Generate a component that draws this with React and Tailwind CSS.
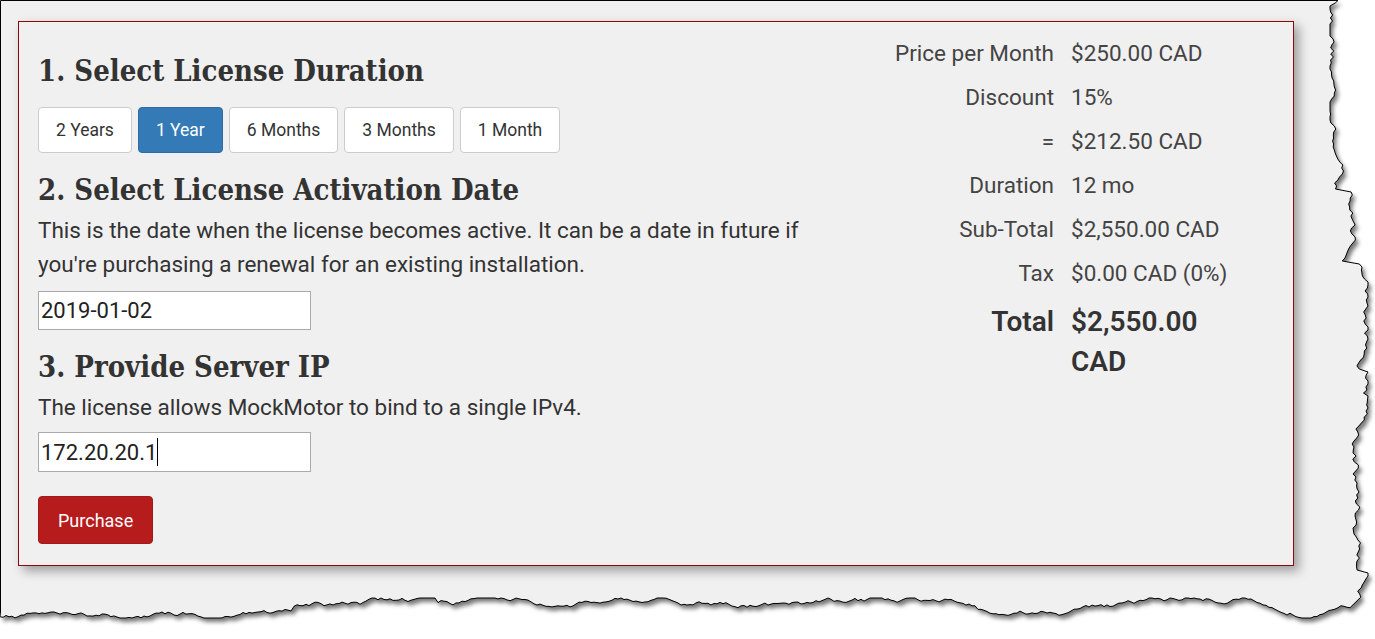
import React from 'react';

const durations = ['2 Years', '1 Year', '6 Months', '3 Months', '1 Month'];

const summary = [
  ['Price per Month', '$250.00 CAD'],
  ['Discount', '15%'],
  ['=', '$212.50 CAD'],
  ['Duration', '12 mo'],
  ['Sub-Total', '$2,550.00 CAD'],
  ['Tax', '$0.00 CAD (0%)'],
];

// jagged outline for the torn screenshot edge
function tornPath() {
  let s = 12345;
  const rnd = () => {
    s = (s * 16807) % 2147483647;
    return s / 2147483647;
  };
  const pts = [[0.5, 0.5], [1338, 0.5]];
  let x = 1338;
  for (let y = 3; y <= 598; y += 3) {
    x += (rnd() - 0.5) * 7;
    if (rnd() < 0.04) x += (rnd() - 0.3) * 30;
    x = Math.max(1330, Math.min(1368, x));
    pts.push([x, y]);
  }
  let y = 606;
  for (let xx = 1350; xx >= 0; xx -= 3) {
    y += (rnd() - 0.5) * 4;
    if (rnd() < 0.03) y += (rnd() - 0.6) * 14;
    y = Math.max(598, Math.min(618, y));
    pts.push([xx, y]);
  }
  pts.push([0.5, 612]);
  return 'M' + pts.map((p) => p[0].toFixed(1) + ' ' + p[1].toFixed(1)).join(' L') + ' Z';
}

const TORN = tornPath();

function Heading({ children, className = '' }) {
  return (
    <h2 className={`font-['DejaVu_Serif_Condensed','DejaVu_Serif',serif] font-bold text-[29px] leading-[40px] text-[#333] ${className}`}>
      {children}
    </h2>
  );
}

export default function App() {
  return (
    <div className="relative w-[1375px] h-[639px] bg-white overflow-hidden font-['Roboto',sans-serif] text-[#333]">
      <svg className="absolute inset-0" width="1375" height="639">
        <defs>
          <filter id="blur" x="-5%" y="-5%" width="110%" height="110%">
            <feGaussianBlur stdDeviation="2" />
          </filter>
        </defs>
        <path d={TORN} transform="translate(3 4)" fill="#777" filter="url(#blur)" />
        <path d={TORN} fill="#f0f0f0" stroke="#000" strokeWidth="1" />
      </svg>

      <div className="relative pt-[21px] pl-[18px]">
        <div className="w-[1276px] h-[545px] border border-[#8e0a0a] bg-[#f0f0f0] shadow-[5px_5px_10px_rgba(0,0,0,0.35)] flex">
          <div className="flex-1 pl-[19px] pt-[29px]">
            <Heading>1. Select License Duration</Heading>
            <div className="flex gap-[6px] mt-[16px]">
              {durations.map((d) => (
                <button
                  key={d}
                  className={
                    d === '1 Year'
                      ? 'h-[46px] px-[17px] rounded-[4px] border border-[#2e6da4] bg-[#337ab7] text-white text-[17.5px]'
                      : 'h-[46px] px-[17px] rounded-[4px] border border-[#ccc] bg-white text-[#333] text-[17.5px]'
                  }
                >
                  {d}
                </button>
              ))}
            </div>

            <Heading className="mt-[17px]">2. Select License Activation Date</Heading>
            <p className="mt-[3px] text-[22.5px] leading-[34px] w-[800px]">
              This is the date when the license becomes active. It can be a date in future if you're purchasing a renewal for an existing installation.
            </p>
            <input
              className="mt-[10px] block w-[273px] h-[39px] bg-white border border-[#aaa] px-[2px] text-[22px] text-[#222] outline-none"
              defaultValue="2019-01-02"
            />

            <Heading className="mt-[17px]">3. Provide Server IP</Heading>
            <p className="mt-[3px] text-[22.5px] leading-[34px]">
              The license allows MockMotor to bind to a single IPv4.
            </p>
            <div className="mt-[8px] w-[273px] h-[40px] bg-white border border-[#aaa] px-[2px] flex items-center text-[22px] text-[#222]">
              172.20.20.1<span className="w-px h-[28px] bg-black" />
            </div>

            <button className="mt-[24px] h-[48px] px-[19px] rounded-[4px] bg-[#b71c1c] border border-[#a31818] text-white text-[18px]">
              Purchase
            </button>
          </div>

          <div className="w-[420px] pt-[9px]">
            <div className="grid grid-cols-[181px_180px] gap-x-[17px]">
              {summary.map(([k, v]) => (
                <React.Fragment key={k}>
                  <div className="text-right text-[22.5px] leading-[44px] text-[#444]">{k}</div>
                  <div className="text-[22.5px] leading-[44px] text-[#444]">{v}</div>
                </React.Fragment>
              ))}
              <div className="mt-[7px] text-right text-[28px] leading-[40px] font-semibold text-[#333]">Total</div>
              <div className="mt-[7px] text-[28px] leading-[40px] font-semibold text-[#333]">$2,550.00 CAD</div>
            </div>
          </div>
        </div>
      </div>
    </div>
  );
}
